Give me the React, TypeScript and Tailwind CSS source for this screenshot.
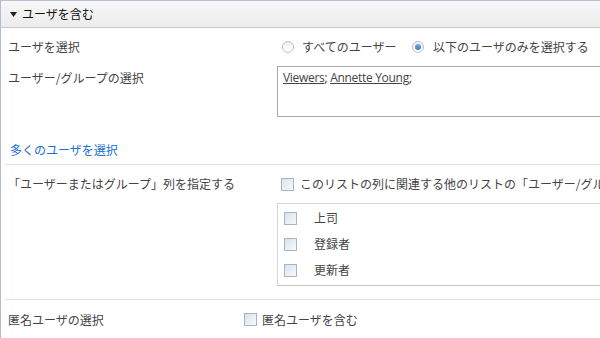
import React from "react";

const jp = "font-['Meiryo','Noto_Sans_CJK_JP',sans-serif]";

function Radio({ checked }: { checked?: boolean }) {
  return (
    <span className="relative flex h-[12px] w-[12px] shrink-0 items-center justify-center rounded-full border border-[#b9c0cc] bg-gradient-to-b from-[#eef1f5] to-[#ffffff]">
      {checked && <span className="h-[6px] w-[6px] rounded-full bg-gradient-to-b from-[#7fa8d8] to-[#3f79bd]" />}
    </span>
  );
}

function Checkbox() {
  return (
    <span className="block h-[13px] w-[13px] shrink-0 border border-[#a9b3c4] bg-gradient-to-br from-[#d7e2ef] to-[#f8fafc]" />
  );
}

export default function App() {
  return (
    <div className={`${jp} h-[338px] w-[600px] overflow-hidden border-l border-[#b4bccb] bg-white text-[12px] text-[#444]`}>
      <div className="flex h-[28px] items-center gap-[5px] border-y border-t-[#b8c1d3] border-b-[#c4c7cc] bg-gradient-to-b from-[#f7f7f7] to-[#ececec] pl-[9px] text-[#111]">
        <svg width="7" height="5" viewBox="0 0 7 5" className="mt-[1px]">
          <path d="M0 0h7L3.5 5z" fill="#222" />
        </svg>
        <span>ユーザを含む</span>
      </div>

      <div className="mt-[1px] flex h-[36px] items-center">
        <div className="w-[275px] pl-[7px]">ユーザを選択</div>
        <div className="flex items-center pl-[6px]">
          <Radio />
          <span className="ml-[8px] w-[110px] whitespace-nowrap">すべてのユーザー</span>
          <Radio checked />
          <span className="ml-[9px] whitespace-nowrap">以下のユーザのみを選択する</span>
        </div>
      </div>

      <div className="mt-[1px] flex">
        <div className="w-[276px] pl-[7px] pt-[3px]">ユーザー/グループの選択</div>
        <div className="h-[51px] flex-1 border border-r-0 border-[#ababab] pl-[5px] pt-[2px] font-['Open_Sans',sans-serif] text-[12px] tracking-[-0.3px] text-[#444]">
          <span className="underline">Viewers</span>; <span className="underline">Annette Young</span>;
        </div>
      </div>

      <div className="mt-[24px] pl-[9px] text-[#1a6fd1]">多くのユーザを選択</div>

      <div className="ml-[4px] mt-[5px] border-t border-[#e1e1e1]" />

      <div className="flex pt-[11px]">
        <div className="w-[276px] whitespace-nowrap pl-[7px] leading-[16px]">「ユーザーまたはグループ」列を指定する</div>
        <div className="flex min-w-0 flex-1 items-center overflow-hidden pl-[4px]">
          <Checkbox />
          <span className="ml-[6px] whitespace-nowrap leading-[16px]">
            このリストの列に関連する他のリストの「ユーザー/グループ」列を含める
          </span>
        </div>
      </div>

      <div className="ml-[276px] mt-[11px] border-y border-l border-t-[#d6d6d6] border-b-[#c6c6c6] border-l-[#d6d6d6] pb-[2px] pt-[1px]">
        {["上司", "登録者", "更新者"].map((t) => (
          <div key={t} className="flex h-[26px] items-center pl-[6px]">
            <Checkbox />
            <span className="ml-[17px]">{t}</span>
          </div>
        ))}
      </div>

      <div className="ml-[4px] mt-[13px] border-t border-[#e1e1e1]" />

      <div className="flex h-[39px] items-center">
        <div className="w-[243px] pl-[7px]">匿名ユーザの選択</div>
        <Checkbox />
        <span className="ml-[5px]">匿名ユーザを含む</span>
      </div>

      <div className="ml-[4px] border-t border-[#e1e1e1]" />
    </div>
  );
}
